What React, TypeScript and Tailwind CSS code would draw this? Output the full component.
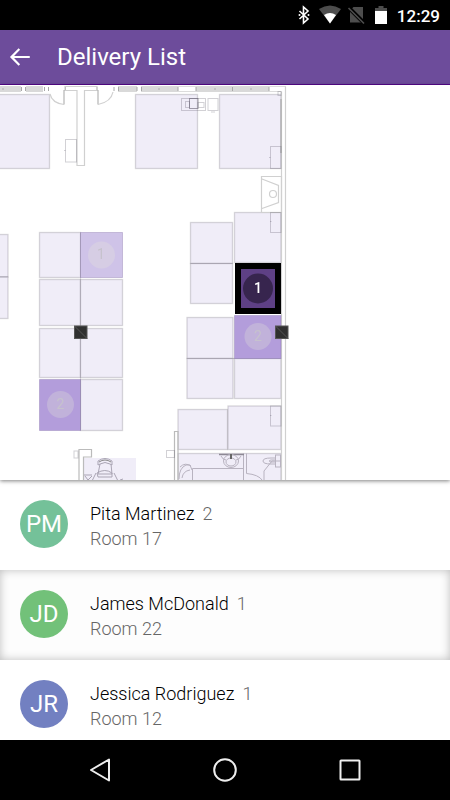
import clsx from "clsx";

interface Delivery {
	name: string;
	initials: string;
	count: number;
	room: number;
	color: string;
	selected?: boolean;
}

type Box = [x: number, y: number, width: number, height: number];

const deliveries: Delivery[] = [
	{ name: "Pita Martinez", initials: "PM", count: 2, room: 17, color: "bg-[#74c199]" },
	{
		name: "James McDonald",
		initials: "JD",
		count: 1,
		room: 22,
		color: "bg-[#72c179]",
		selected: true,
	},
	{ name: "Jessica Rodriguez", initials: "JR", count: 1, room: 12, color: "bg-[#7280c1]" },
];

const rooms: Box[] = [
	[-20, 9.5, 69.5, 74],
	[135.5, 9.5, 62, 74],
	[219.5, 9.5, 61.5, 74],
	[-20, 149.5, 28, 42.5],
	[-20, 192, 28, 41.5],
	[39.5, 147.5, 41, 45],
	[39.5, 194.5, 41, 46],
	[80.5, 194.5, 42, 46],
	[39.5, 243.5, 41, 49],
	[80.5, 243.5, 42, 49],
	[80.5, 294.5, 42, 51],
	[190.5, 137.5, 42, 41],
	[190.5, 178.5, 42, 40],
	[234.5, 127.5, 46.5, 50],
	[187, 232.5, 46, 41],
	[187, 273.5, 46, 40],
	[234.5, 273.5, 46.5, 40],
	[178, 324.5, 49.5, 40],
	[228, 321, 53, 43.5],
	[178, 368.5, 103, 40],
];

const cabinets: Box[] = [
	[65.5, 54.5, 11, 22.5],
	[270.5, 61.5, 10.5, 22],
	[270.5, 127.5, 10.5, 20],
	[270.5, 321, 10.5, 20],
	[208, 13.5, 10, 12],
	[181.5, 13.5, 24, 12],
	[185.5, 16.5, 4, 6],
	[198, 17.5, 6, 5],
	[278, 6.5, 3, 4],
	[166.5, 365.5, 8, 7],
	[74, 366, 4, 7],
];

const wallBands: Box[] = [
	[0, 1, 48, 6],
	[114, 1, 64, 6],
	[196, 1, 73, 6],
];

const windows: Box[] = [
	[21, 1, 5, 6],
	[43, 1, 5, 6],
	[114, 1, 4, 6],
	[137, 1, 4, 6],
];

const pillars: Box[] = [
	[74.5, 241, 12.5, 12.5],
	[275.5, 241, 12.5, 12.5],
];

function FloorPlan() {
	return (
		<svg
			viewBox="0 0 450 395"
			preserveAspectRatio="xMinYMin slice"
			className="block h-full w-full"
			role="img"
			aria-label="Floor plan"
		>
			<g fill="#d9d9d9">
				{wallBands.map(([x, y, width, height]) => (
					<rect key={x} x={x} y={y} width={width} height={height} />
				))}
			</g>
			<path d="M178 1.5h18M269 1.5h17M178 6.5h18M269 6.5h12" stroke="#dcdcdc" fill="none" />
			<g fill="#fff">
				{windows.map(([x, y, width, height]) => (
					<rect key={x} x={x} y={y} width={width} height={height} />
				))}
			</g>
			<path
				d="M21.5 2v4M25.5 2v4M44.5 2v4M48.5 2v4M65.5 2v4M97 2v4M114 2v4M118.5 2v4M137 2v4M141.5 2v4M178 2v4M196 2v4M232.5 2v4M269 2v4"
				stroke="#a8a8a8"
				fill="none"
			/>
			<path d="M2 4h2M158 4h2M214 4h2M250 4h2" stroke="#b0b0b0" />

			<g fill="#f0edf8" stroke="#5f5a6a" strokeOpacity="0.24" strokeWidth="1.3">
				{rooms.map(([x, y, width, height]) => (
					<rect key={`${x}-${y}`} x={x} y={y} width={width} height={height} />
				))}
			</g>
			<rect x="83" y="373" width="53" height="30" fill="#f0edf8" />

			<g fill="none" stroke="#d0d0d0" strokeWidth="1.2">
				{/* entrance doors and the wall between them */}
				<path d="M65 5.5v-4h32v4M64 5.5h13v75h7.5v-75H98" />
				<path d="M64 5v14.5M98 5v14.5" stroke="#b5b5b5" />
				<path d="M50 9Q52 18 64 19.5M98 19.5Q111 17 113 7" />
				{/* outer walls on the right */}
				<path d="M285.5 1.5V400M281.5 6.5V400" />
				<path d="M281 14v54" stroke="#aaa" />
				<path d="M261.5 91.5h20v36h-20zM262 94l16.5 6.5v17l-16.5 6" />
				<circle cx="273" cy="109" r="3.5" />
				{/* lower walls */}
				<path d="M79 400V364.5h12.5v7.5h-8v28M174.5 400V346.5h3.5V400" stroke="#bbb" />
			</g>
			<g fill="none" stroke="#4b4658" strokeOpacity="0.25">
				{cabinets.map(([x, y, width, height]) => (
					<rect key={`${x}-${y}`} x={x} y={y} width={width} height={height} />
				))}
				<rect x="189.5" y="13.5" width="8.5" height="10" strokeOpacity="0.5" />
				<path d="M64 65.5h1.5M269 72.5h1.5M270 136.5h1.5M270 330.5h1.5M211 27h4" />
				<path d="M187 273.5h94M190.5 178.5h42M0 192h8" strokeOpacity="0.2" />
			</g>

			{/* chair */}
			<g fill="none" stroke="#aaa5b4">
				<path d="M98 380v-4q7-5 14 0v4l-2-1q-5-3-10 0zM100 379l-2 10h14l-1-10M97 388q8-5 15 0v4H98zM96 388l-4 8M114 388l4 8M84 390h8M85 391l3 4 4-4M120 395l3-1" />
				<path d="M99 377q6-4 12 0" stroke="#888" />
			</g>

			{/* washroom */}
			<g fill="none" stroke="#b8b3c0">
				<path d="M192.5 400V383.5h51M243.5 368.5v30M246.5 368.5v20q12 1 16 7M281 376h-9l-8 10v9" />
				<path d="M219 369.5h25" stroke="#8c8894" strokeWidth="1.5" />
				<path d="M221 371q2 4 5 4M241 371q-2 4-5 4" />
				<ellipse cx="231" cy="376" rx="7.5" ry="6.5" />
				<ellipse cx="231" cy="377" rx="5" ry="4" />
				<path d="M231 369v5" stroke="#666" strokeWidth="2" />
				<rect x="275.5" y="370" width="5" height="12" />
				<path d="M275 373h-4q-8 0-8 3t8 3h4M275 375h-4q-4 1 0 2h4" />
				<path d="M179 394q0-11 7-14h4l2 5M180 382q5-5 11-1M182 393q1-7 8-8" />
			</g>

			{/* desks with deliveries */}
			<g stroke="#6f5a9c" strokeOpacity="0.3">
				<rect x="80.5" y="147.5" width="42" height="45" fill="#cfc3e8" />
				<rect x="39.5" y="294.5" width="41" height="51" fill="#b39ddb" />
				<rect x="234.5" y="230.5" width="46.5" height="43" fill="#b39ddb" />
			</g>
			<path d="M80.5 147.5v198" stroke="#4b4658" strokeOpacity="0.15" />
			<circle cx="101.5" cy="170" r="13.5" fill="#d6cde4" />
			<circle cx="60.5" cy="319.5" r="13.5" fill="#c1b2da" />
			<circle cx="258" cy="251.5" r="13.5" fill="#c1b2da" />

			<rect x="235" y="178" width="46" height="51" fill="#000" />
			<rect x="241" y="184" width="34" height="39" fill="#5e4085" />
			<circle cx="258" cy="203.5" r="15" fill="#37254e" />

			<g fontFamily="Roboto, sans-serif" fontSize="14" textAnchor="middle" fill="#c6c2cd">
				<text x="101" y="174">1</text>
				<text x="60.5" y="324">2</text>
				<text x="258" y="256">2</text>
				<text x="258" y="208" fill="#fff" fontWeight="500">
					1
				</text>
			</g>

			{pillars.map(([x, y, width, height]) => (
				<g key={x} stroke="#555">
					<rect x={x} y={y} width={width} height={height} fill="#303030" />
					<path d={`M${x} ${y}l${width} ${height}`} />
				</g>
			))}
		</svg>
	);
}

function StatusBar() {
	return (
		<div className="flex h-[30px] shrink-0 items-center justify-end gap-2 bg-black pr-2.5 text-white">
			<svg viewBox="0 0 92 20" className="h-5 w-[92px]" aria-hidden="true">
				<path
					d="M2.5 6l8.5 8-4.500 4V2l4.500 4-8.500 8"
					fill="none"
					stroke="#fff"
					strokeWidth="1.6"
				/>
				<circle cx="2.500" cy="10" r="1" fill="#fff" />
				<circle cx="11.500" cy="10" r="1" fill="#fff" />
				<path d="M22 4q11-7 22 0L33 18.500z" fill="#4d4d4d" />
				<path d="M27 10q6-4 12 0L33 18.500z" fill="#fff" />
				<path d="M56.500 2H66v15.500H53V5.500z" fill="#4d4d4d" />
				<path d="M51.500 2.500L68 19" stroke="#000" strokeWidth="4" />
				<path d="M51.500 3L67 18.500" stroke="#4d4d4d" strokeWidth="1.6" />
				<path d="M81.500 1h5v2H90v4H78V3h3.500z" fill="#4d4d4d" />
				<path d="M78 6h12v13H78z" fill="#fff" />
			</svg>
			<span className="pt-0.5 text-[17px] leading-5 font-medium">12:29</span>
		</div>
	);
}

function AppBar() {
	return (
		<header className="flex h-[55px] shrink-0 items-center gap-6 border-b border-[#57078f] bg-[#6d4c9b] px-[7px] text-white">
			<button type="button" aria-label="Back">
				<svg viewBox="0 0 24 24" className="size-[26px]" fill="currentColor">
					<path d="M21 11v2H6.500l5.600 5.600L10.700 20 2.700 12l8-8 1.400 1.400L6.500 11z" />
				</svg>
			</button>
			<h1 className="text-2xl">Delivery List</h1>
		</header>
	);
}

function DeliveryRow({ delivery }: { delivery: Delivery }) {
	return (
		<li
			className={clsx(
				"flex h-[90px] items-center gap-[22px] px-5 pb-0.5",
				delivery.selected
					? "bg-[#fdfdfd] shadow-[inset_0_0_10px_rgba(0,0,0,0.25)]"
					: "bg-white",
			)}
		>
			<div
				className={clsx(
					"flex size-12 shrink-0 items-center justify-center rounded-full text-2xl text-white",
					delivery.color,
				)}
			>
				{delivery.initials}
			</div>
			<div className="pt-1 text-lg leading-[25px] font-[350] text-[#666]">
				<p>
					<span className="mr-2 text-black">{delivery.name}</span>
					{delivery.count}
				</p>
				<p>Room {delivery.room}</p>
			</div>
		</li>
	);
}

function NavigationBar() {
	return (
		<nav className="flex h-[60px] shrink-0 items-center justify-center gap-[95px] bg-black text-[#eee]">
			<button type="button" aria-label="Back">
				<svg viewBox="0 0 30 30" className="size-[30px]" fill="none" stroke="currentColor" strokeWidth="2">
					<path d="M24 4.500v21L6 15z" strokeLinejoin="round" />
				</svg>
			</button>
			<button type="button" aria-label="Home">
				<svg viewBox="0 0 30 30" className="size-[30px]" fill="none" stroke="currentColor" strokeWidth="2">
					<circle cx="15" cy="15" r="10.8" />
				</svg>
			</button>
			<button type="button" aria-label="Recent apps">
				<svg viewBox="0 0 30 30" className="size-[30px]" fill="none" stroke="currentColor" strokeWidth="2">
					<rect x="5.5" y="5.5" width="19" height="19" rx="0.5" />
				</svg>
			</button>
		</nav>
	);
}

export default function App() {
	return (
		<div className="flex h-screen flex-col bg-white font-['Roboto',sans-serif]">
			<StatusBar />
			<AppBar />
			<main className="flex min-h-0 flex-1 flex-col">
				<section className="relative z-10 min-h-0 flex-1 bg-white shadow-[0_1px_4px_rgba(0,0,0,0.5)]">
					<FloorPlan />
				</section>
				<ul className="h-[260px] shrink-0 overflow-y-auto [scrollbar-width:none]">
					{deliveries.map((delivery) => (
						<DeliveryRow key={delivery.name} delivery={delivery} />
					))}
				</ul>
			</main>
			<NavigationBar />
		</div>
	);
}
